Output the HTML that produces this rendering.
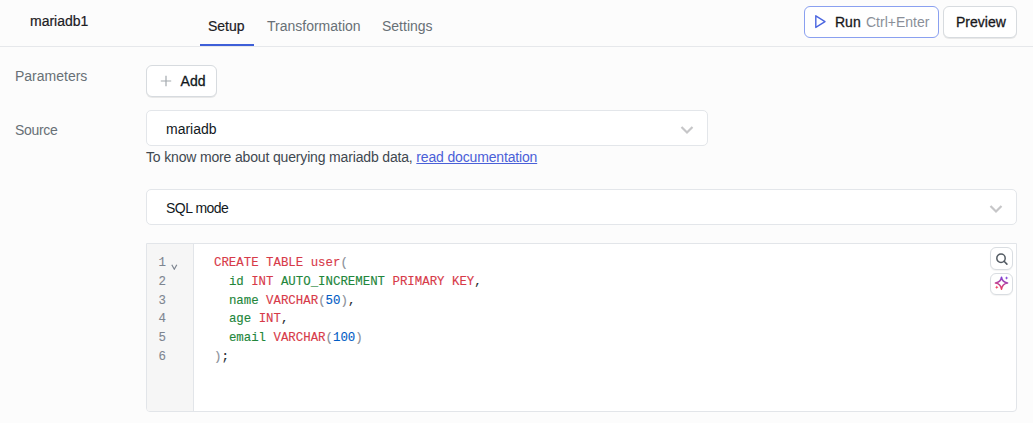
<!DOCTYPE html>
<html><head><meta charset="utf-8">
<style>
*{box-sizing:border-box;margin:0;padding:0}
html,body{width:1033px;height:423px;overflow:hidden;background:#fcfcfc;font-family:"Liberation Sans",sans-serif;font-size:14px;color:#11181c}
.abs{position:absolute}
.t{position:absolute;white-space:pre;line-height:1}
#hdr{position:absolute;left:0;top:0;width:1033px;height:47px;border-bottom:1px solid #e6e8eb;background:#fcfcfc}
.btn{position:absolute;background:#fff;border:1px solid #d7dbdf;border-radius:6px;box-shadow:0 1px 0 rgba(0,0,0,0.08)}
.sel{position:absolute;background:#fff;border:1px solid #e3e6ea;border-radius:5px}
.lbl{color:#687076}
.md{-webkit-text-stroke:0.3px currentColor}
.kw{color:#d73a49}.nm{color:#22863a}.num{color:#005cc5}.pn{color:#8a8f98}.pc{color:#24292e}
</style></head>
<body>
<div id="hdr"></div>
<div class="t md" style="left:30px;top:14px;color:#1c2024;-webkit-text-stroke:0.2px #1c2024">mariadb1</div>
<div class="t md" style="left:208px;top:19px;color:#1c2024;-webkit-text-stroke:0.2px #1c2024">Setup</div>
<div class="t" style="left:267px;top:19px;color:#687076">Transformation</div>
<div class="t" style="left:382px;top:19px;color:#687076">Settings</div>
<div class="abs" style="left:200px;top:44px;width:54px;height:2px;background:#3e5fd8"></div>

<div class="btn" style="left:804px;top:6px;width:135px;height:32px;border-color:#8aa0f0;box-shadow:none"></div>
<svg class="abs" style="left:814px;top:14px" width="14" height="16" viewBox="0 0 14 16"><path d="M1.8 1.8 L11 7.6 L1.8 13.4 Z" fill="none" stroke="#4b66e0" stroke-width="1.4" stroke-linejoin="round"/></svg>
<div class="t md" style="left:835px;top:15px;color:#18181b">Run</div>
<div class="t" style="left:866px;top:15px;color:#8a8f98">Ctrl+Enter</div>

<div class="btn" style="left:943px;top:6px;width:74px;height:32px"></div>
<div class="t md" style="left:956px;top:15px;color:#18181b">Preview</div>

<div class="t lbl" style="left:15px;top:69px">Parameters</div>
<div class="btn" style="left:146px;top:65px;width:71px;height:32px"></div>
<svg class="abs" style="left:160px;top:75px" width="12" height="12" viewBox="0 0 12 12"><path d="M6 0.8V11.2M0.8 6H11.2" stroke="#a3a9ae" stroke-width="1.2"/></svg>
<div class="t md" style="left:180.6px;top:74px">Add</div>

<div class="t lbl" style="left:15px;top:123px;letter-spacing:-0.3px">Source</div>
<div class="sel" style="left:146px;top:110px;width:562px;height:36px"></div>
<div class="t" style="left:166px;top:122px">mariadb</div>
<svg class="abs" style="left:680px;top:125px" width="14" height="10" viewBox="0 0 14 10"><path d="M1.5 2 L7 7.5 L12.5 2" fill="none" stroke="#c6c6c8" stroke-width="2.2"/></svg>
<div class="t" style="left:146px;top:150px;color:#3f4850;letter-spacing:-0.16px">To know more about querying mariadb data, <span style="color:#4a60d8;text-decoration:underline">read documentation</span></div>

<div class="sel" style="left:146px;top:189px;width:871px;height:36px"></div>
<div class="t" style="left:166px;top:201px;letter-spacing:-0.5px">SQL mode</div>
<svg class="abs" style="left:989px;top:204px" width="14" height="10" viewBox="0 0 14 10"><path d="M1.5 2 L7 7.5 L12.5 2" fill="none" stroke="#c6c6c8" stroke-width="2.2"/></svg>

<div class="abs" style="left:146px;top:243px;width:871px;height:169px;background:#fff;border:1px solid #e2e5e9;border-radius:0 0 4px 4px;overflow:hidden">
  <div class="abs" style="left:0;top:0;width:47px;height:100%;background:#f6f6f6;border-right:1px solid #e2e5e9"></div>
</div>
<div class="abs" id="gut" style="-webkit-text-stroke:0.1px currentColor;left:146px;top:253.7px;width:20px;font-family:'Liberation Mono',monospace;font-size:12.4px;line-height:18.9px;color:#7d8590;text-align:right;white-space:pre">1
2
3
4
5
6</div>
<svg class="abs" style="left:171px;top:264px" width="7" height="6" viewBox="0 0 7 6"><path d="M0.8 0.8 L3.3 5.2 L5.8 0.8" fill="none" stroke="#7d8590" stroke-width="1.2"/></svg>
<div class="abs" id="code" style="left:214px;top:253.7px;-webkit-text-stroke:0.12px currentColor;font-family:'Liberation Mono',monospace;font-size:12.4px;line-height:18.9px;color:#24292e;white-space:pre"><span class="kw">CREATE TABLE user</span><span class="pn">(</span>
  <span class="nm">id</span> <span class="kw">INT</span> <span class="nm">AUTO_INCREMENT</span> <span class="kw">PRIMARY KEY</span>,
  <span class="nm">name</span> <span class="kw">VARCHAR</span><span class="pn">(</span><span class="num">50</span><span class="pn">)</span>,
  <span class="nm">age</span> <span class="kw">INT</span>,
  <span class="nm">email</span> <span class="kw">VARCHAR</span><span class="pn">(</span><span class="num">100</span><span class="pn">)</span>
<span class="pn">)</span>;</div>
<div class="btn" style="left:990px;top:247px;width:23px;height:23px;border-radius:6px;border-color:#d9dde1;box-shadow:0 1px 1px rgba(0,0,0,0.05)"></div>
<svg class="abs" style="left:993px;top:250px" width="16" height="16" viewBox="0 0 16 16"><circle cx="8" cy="8.2" r="4.2" fill="none" stroke="#535b63" stroke-width="1.5"/><path d="M11.1 11.3 L13.9 14.1" stroke="#535b63" stroke-width="1.6" stroke-linecap="round"/></svg>
<div class="btn" style="left:990px;top:273px;width:23px;height:22px;border-radius:6px;border-color:#d9dde1;box-shadow:0 1px 1px rgba(0,0,0,0.05)"></div>
<svg class="abs" style="left:993px;top:275px" width="18" height="18" viewBox="0 0 18 18"><defs><linearGradient id="g" x1="0.6" y1="0" x2="0.35" y2="1"><stop offset="0" stop-color="#7a3fd6"/><stop offset="0.5" stop-color="#b9459e"/><stop offset="1" stop-color="#f03a5a"/></linearGradient></defs><path d="M8.5 2.2 Q9.2 7.2 14.6 8 Q9.2 8.8 8.5 14.2 Q7.8 8.8 2.4 8 Q7.8 7.2 8.5 2.2Z" fill="none" stroke="url(#g)" stroke-width="1.5" stroke-linejoin="round"/><path d="M13.6 1.2 Q13.9 2.8 15.4 3 Q13.9 3.2 13.6 4.8 Q13.3 3.2 11.8 3 Q13.3 2.8 13.6 1.2Z" fill="#8a4fd8"/><path d="M3.8 10.4 Q4.05 11.95 5.6 12.2 Q4.05 12.45 3.8 14 Q3.55 12.45 2 12.2 Q3.55 11.95 3.8 10.4Z" fill="#f03a5a"/></svg>
</body></html>
